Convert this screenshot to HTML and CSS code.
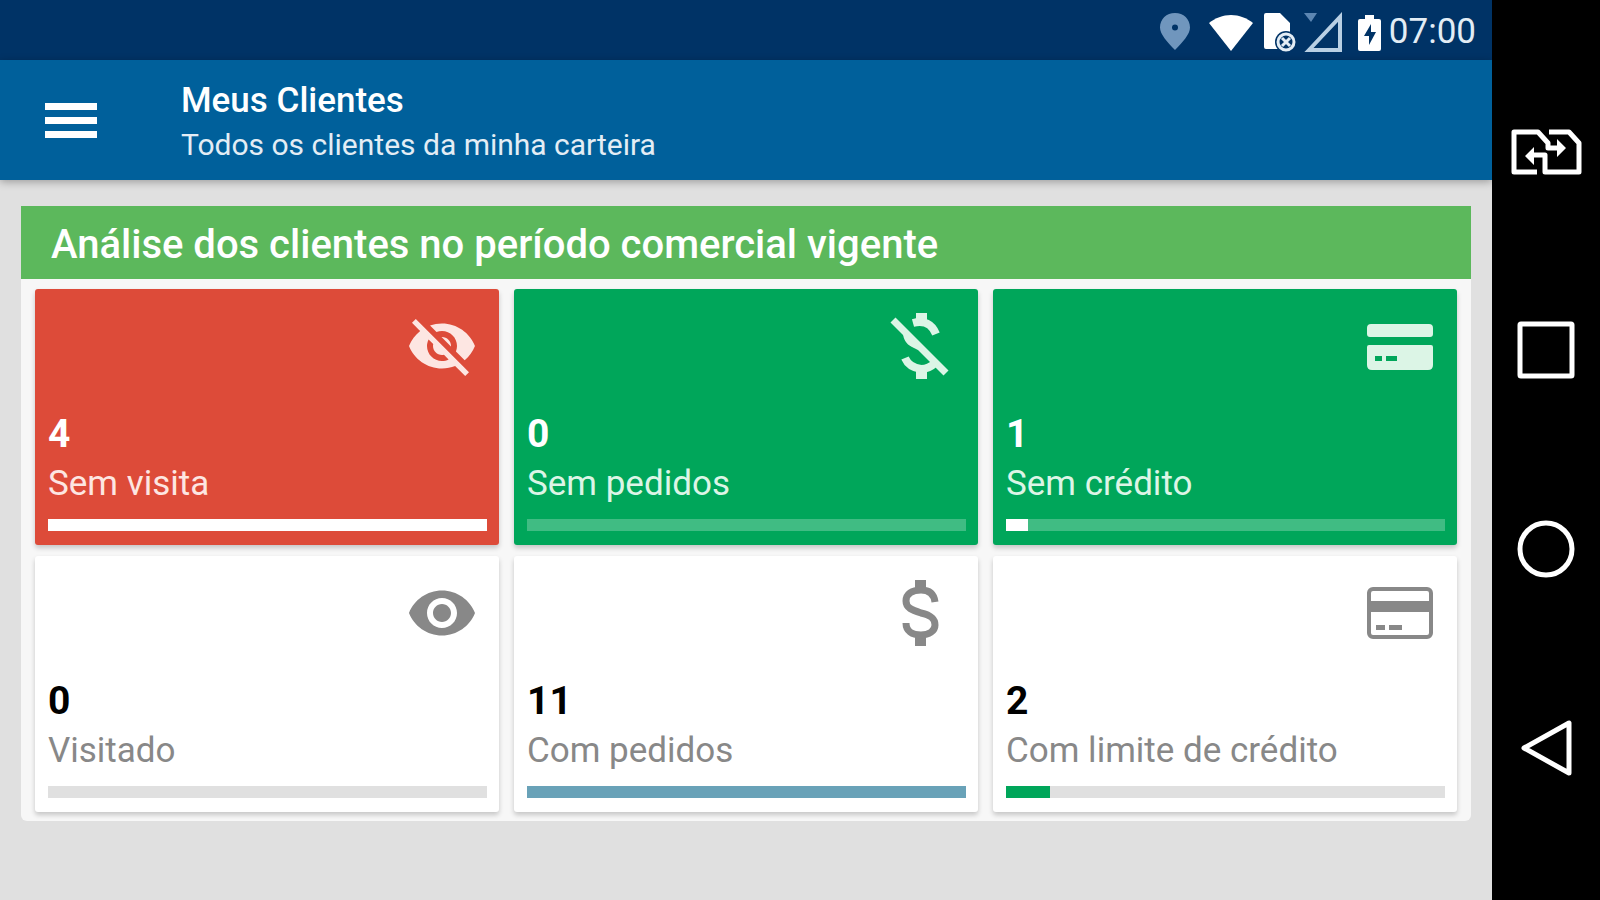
FILE: index.html
```html
<!DOCTYPE html>
<html lang="pt-BR">

<head>
    <meta charset="UTF-8">
    <meta name="viewport" content="width=device-width, initial-scale=1.0">
    <title>Meus Clientes</title>
    <link rel="stylesheet" href="styles.css">
</head>

<body>
    <div class="app">
        <!-- Status bar -->
        <div class="status-bar">
            <svg width="41" height="40" viewBox="0 0 41 40">
                <path fill="#7096bd" fill-rule="evenodd" d="M15 1C6.5 1 0 7 0 15.500 0 22 7 30 15 38c8-8 15-16 15-22.500C30 7 23.500 1 15 1zm0 11.500a3 3 0 1 1 0 6 3 3 0 0 1 0-6z" />
            </svg>
            <svg width="47" height="40" viewBox="0 0 47 40">
                <path fill="#fff" d="M0 11C6 6 14 3 22 3s16 3 22 8L22 39z" />
            </svg>
            <svg width="32" height="40" viewBox="0 0 32 40">
                <path fill="#fff" d="M2 1h14l10 10v12H14v14H2q-2 0-2-2V3q0-2 2-2z" />
                <circle cx="22" cy="30" r="11" fill="#003366" />
                <circle cx="22" cy="30" r="8" fill="none" stroke="#e3edf5" stroke-width="3" />
                <path stroke="#e3edf5" stroke-width="3" d="M18 26l8 8M26 26l-8 8" />
            </svg>
            <svg width="46" height="40" viewBox="0 0 46 40">
                <path fill="#5c86b2" d="M0 1h13L7 10z" />
                <path fill="none" stroke="#b9d0e4" stroke-width="4" d="M5 38L36 5v33z" />
            </svg>
            <svg width="23" height="40" viewBox="0 0 23 40">
                <path fill="#fff" d="M7 3h9v4h5q2 0 2 2v28q0 2-2 2H2q-2 0-2-2V9q0-2 2-2h5z" />
                <path fill="#003366" d="M13 12L6 24h5v9l7-13h-5z" />
            </svg>
            <span class="clock">07:00</span>
        </div>

        <header class="toolbar">
            <button type="button" class="menu-btn" aria-label="Menu">
                <span></span>
                <span></span>
                <span></span>
            </button>
            <div class="toolbar-text">
                <h1 class="toolbar-title">Meus Clientes</h1>
                <p class="toolbar-subtitle">Todos os clientes da minha carteira</p>
            </div>
        </header>

        <main class="content">
            <section class="panel">
                <h2 class="panel-title">Análise dos clientes no período comercial vigente</h2>
                <div class="card-container">
                    <article class="card card-red">
                        <svg class="card-icon" viewBox="0 0 24 24">
                            <path d="M12 7c2.76 0 5 2.24 5 5 0 .65-.13 1.26-.36 1.83l2.92 2.92c1.51-1.26 2.7-2.89 3.43-4.75-1.73-4.39-6-7.5-11-7.5-1.4 0-2.74.25-3.98.7l2.16 2.16C10.74 7.13 11.35 7 12 7zM2 4.27l2.28 2.28.46.46C3.08 8.3 1.78 10.02 1 12c1.73 4.39 6 7.5 11 7.5 1.55 0 3.03-.3 4.38-.84l.42.42L19.73 22 21 20.73 3.27 3 2 4.27zM7.53 9.8l1.55 1.55c-.05.21-.08.43-.08.65 0 1.66 1.34 3 3 3 .22 0 .44-.03.65-.08l1.55 1.55c-.67.33-1.41.53-2.2.53-2.76 0-5-2.24-5-5 0-.79.2-1.53.53-2.2zm4.31-.78l3.15 3.15.02-.16c0-1.66-1.34-3-3-3l-.17.01z" />
                        </svg>
                        <p class="card-value">4</p>
                        <p class="card-label">Sem visita</p>
                        <div class="bar"><div class="bar-fill" style="width: 100%"></div></div>
                    </article>

                    <article class="card card-green">
                        <svg class="card-icon" viewBox="0 0 72 72">
                            <path d="M31 3h11v9H31zM31 60h11v9H31zM18 22l13 12 2 6-6-3c-6-3-9-8-9-15z" />
                            <path class="line" stroke-width="7" d="M8 10l53 53" />
                            <path class="line" stroke-width="8" d="M28 13c11-3 19 1 23 11M20 48c3 7 9 10 16 11 6 0 10-2 14-6" />
                        </svg>
                        <p class="card-value">0</p>
                        <p class="card-label">Sem pedidos</p>
                        <div class="bar"><div class="bar-fill" style="width: 0%"></div></div>
                    </article>

                    <article class="card card-green">
                        <svg class="card-icon" viewBox="0 0 72 72">
                            <path fill-rule="evenodd" d="M7 14h58q4 0 4 4v6q0 3-3 3H6q-3 0-3-3v-6q0-4 4-4zM5 35h62q2 0 2 2v18q0 5-5 5H8q-5 0-5-5V37q0-2 2-2zM11 46v5h7v-5zM22 46v5h11v-5z" />
                        </svg>
                        <p class="card-value">1</p>
                        <p class="card-label">Sem crédito</p>
                        <div class="bar"><div class="bar-fill" style="width: 5%"></div></div>
                    </article>

                    <article class="card">
                        <svg class="card-icon" viewBox="0 0 24 24">
                            <path d="M12 4.5C7 4.5 2.73 7.61 1 12c1.73 4.39 6 7.5 11 7.5s9.27-3.11 11-7.5c-1.73-4.39-6-7.5-11-7.5zM12 17c-2.76 0-5-2.24-5-5s2.24-5 5-5 5 2.24 5 5-2.24 5-5 5zm0-8c-1.66 0-3 1.34-3 3s1.34 3 3 3 3-1.34 3-3-1.34-3-3-3z" />
                        </svg>
                        <p class="card-value">0</p>
                        <p class="card-label">Visitado</p>
                        <div class="bar"><div class="bar-fill" style="width: 0%"></div></div>
                    </article>

                    <article class="card">
                        <svg class="card-icon" viewBox="0 0 72 72">
                            <path d="M30 3h11v9H30zM30 60h11v9H30z" />
                            <path class="line" stroke-width="7" d="M50 25C49 17 44 13 36 13 27 13 21 17 21 24s6 9 15 12c9 2 14 5 14 12 0 6-6 10-14 10-9 0-15-4-15-12" />
                        </svg>
                        <p class="card-value">11</p>
                        <p class="card-label">Com pedidos</p>
                        <div class="bar"><div class="bar-fill fill-blue" style="width: 100%"></div></div>
                    </article>

                    <article class="card">
                        <svg class="card-icon" viewBox="0 0 72 72">
                            <rect class="line" stroke-width="4" x="5" y="12" width="62" height="48" rx="4" />
                            <path d="M4 24h64v11H4zM12 48h9v5h-9zM25 48h13v5H25z" />
                        </svg>
                        <p class="card-value">2</p>
                        <p class="card-label">Com limite de crédito</p>
                        <div class="bar"><div class="bar-fill fill-green" style="width: 10%"></div></div>
                    </article>
                </div>
            </section>
        </main>
    </div>

    <!-- Device navigation -->
    <nav class="nav-bar">
        <button type="button" class="nav-btn" aria-label="Trocar SIM">
            <svg width="80" height="52" viewBox="0 0 80 52">
                <path class="nav-line" d="M31 47H8V7h24l10 11v5h12M43 7h20l10 11v29H39V30H27" />
                <path fill="#fff" d="M51 14l9 9-9 9zM28 22l-9 9 9 9z" />
            </svg>
        </button>
        <button type="button" class="nav-btn" aria-label="Recentes">
            <svg width="80" height="60" viewBox="0 0 80 60">
                <rect class="nav-line" x="14" y="4" width="52" height="52" rx="1" />
            </svg>
        </button>
        <button type="button" class="nav-btn" aria-label="Início">
            <svg width="80" height="60" viewBox="0 0 80 60">
                <circle class="nav-line" cx="40" cy="30" r="26" />
            </svg>
        </button>
        <button type="button" class="nav-btn" aria-label="Voltar">
            <svg width="80" height="60" viewBox="0 0 80 60">
                <path class="nav-line" d="M18 30L63 5v50z" />
            </svg>
        </button>
    </nav>
</body>

</html>
```
FILE: styles.css
```css
* {
    box-sizing: border-box;
}

body {
    display: flex;
    min-height: 100vh;
    margin: 0;
    background-color: #000;
    font-family: Roboto, Arial, sans-serif;
}

h1,
h2,
p {
    margin: 0;
}

button {
    padding: 0;
    border: none;
    background: none;
    cursor: pointer;
}

.app {
    display: flex;
    flex-direction: column;
    flex: 1;
    background-color: #e0e0e0;
}

.status-bar {
    display: flex;
    align-items: center;
    justify-content: flex-end;
    gap: 8px;
    height: 60px;
    padding: 3px 16px 0 0;
    background-color: #003366;
}

.clock {
    font-size: 35px;
    line-height: 40px;
    color: #e3edf5;
}

.toolbar {
    display: flex;
    align-items: center;
    gap: 84px;
    height: 120px;
    padding: 0 45px;
    background-color: #00609b;
    color: #fff;
    box-shadow: 0 2px 8px rgba(0, 0, 0, 0.3);
}

.toolbar-text {
    padding-top: 6px;
}

.menu-btn {
    display: flex;
    flex-direction: column;
    gap: 7px;
    width: 52px;
}

.menu-btn span {
    height: 7px;
    background-color: #fff;
}

.toolbar-title {
    font-size: 35px;
    font-weight: 500;
    line-height: 44px;
}

.toolbar-subtitle {
    font-size: 30px;
    line-height: 44px;
    color: #e3edf5;
}

.content {
    padding: 26px 21px;
}

.panel {
    background-color: #f7f7f7;
    border-radius: 6px;
}

.panel-title {
    padding: 4px 30px 0;
    background-color: #5cb85c;
    color: #fff;
    font-size: 40px;
    font-weight: 500;
    line-height: 69px;
}

.card-container {
    display: grid;
    grid-template-columns: repeat(3, 1fr);
    gap: 11px 15px;
    padding: 10px 14px 9px;
}

.card {
    display: flex;
    flex-direction: column;
    min-height: 256px;
    padding: 21px 12px 14px 13px;
    background-color: #fff;
    border-radius: 3px;
    color: #888;
    box-shadow: 0 3px 5px rgba(0, 0, 0, 0.2);
}

.card-icon {
    align-self: flex-end;
    width: 72px;
    height: 72px;
    margin-right: 9px;
    fill: currentColor;
}

.card-icon .line {
    fill: none;
    stroke: currentColor;
}

.card-value {
    margin-top: auto;
    color: #000;
    font-size: 39px;
    font-weight: 700;
    line-height: 48px;
}

.card-label {
    margin-bottom: 9px;
    font-size: 35px;
    line-height: 52px;
}

.bar {
    height: 12px;
    background-color: #e0e0e0;
}

.bar-fill {
    height: 100%;
    background-color: #fff;
}

.fill-blue {
    background-color: #69a2b8;
}

.fill-green {
    background-color: #00a65a;
}

.card-red {
    background-color: #dd4b39;
    color: #fde6e2;
}

.card-green {
    background-color: #00a65a;
    color: #dcf5e6;
}

.card-red .card-value,
.card-green .card-value {
    color: #fff;
}

.card-red .bar,
.card-green .bar {
    background-color: rgba(255, 255, 255, 0.25);
}

.nav-bar {
    display: grid;
    grid-template-rows: repeat(4, 1fr);
    width: 108px;
    padding: 51px 0 53px;
}

.nav-btn {
    display: flex;
    align-items: center;
    justify-content: center;
}

.nav-line {
    fill: none;
    stroke: #fff;
    stroke-width: 5;
    stroke-linejoin: round;
}
```
